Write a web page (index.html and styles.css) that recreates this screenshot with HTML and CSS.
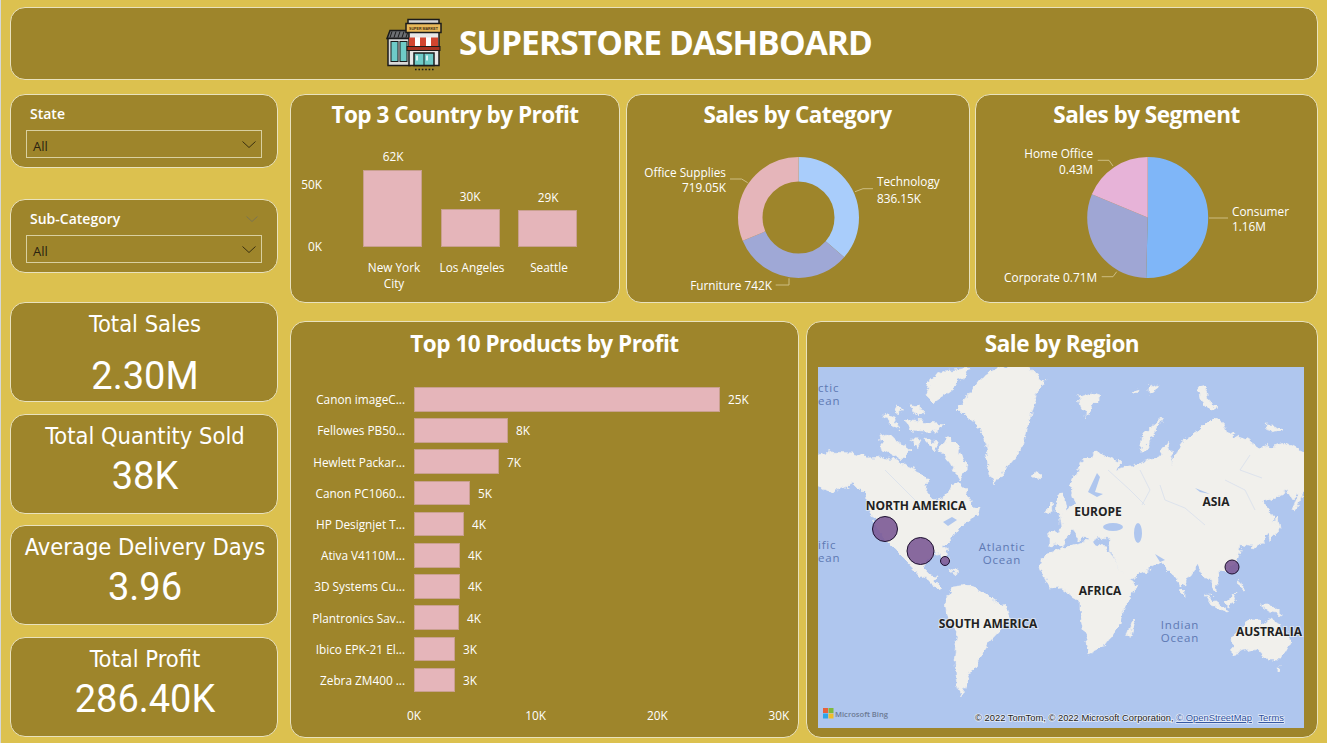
FILE: index.html
```html
<!doctype html>
<html lang="en">
<head>
  <meta charset="UTF-8">
  <title>Superstore Dashboard</title>
  <link rel="stylesheet" href="styles.css">
</head>
<body>
  <div class="page">
    <header class="card header">
      <svg class="logo" viewBox="0 0 56 54" width="56" height="54">
        <rect x="22" y="2.5" width="31" height="6" fill="#d8d8d8" stroke="#1b1b1b" stroke-width="1.5"/>
        <path d="M4 13.5 H26 V21.5 H1 Z" fill="#6d6f73" stroke="#1b1b1b" stroke-width="1.5"/>
        <path d="M6 14.5 L4 20.5 M10 14.5 L8 20.5 M14 14.5 L12 20.5 M18 14.5 L16 20.5 M22 14.5 L20 20.5" stroke="#1b1b1b"/>
        <rect x="2" y="21.5" width="22" height="27" fill="#d9d9d9" stroke="#1b1b1b" stroke-width="1.5"/>
        <rect x="5" y="24.5" width="7" height="20" fill="#6ecbc8" stroke="#1b1b1b"/>
        <rect x="14" y="24.5" width="7" height="20" fill="#6ecbc8" stroke="#1b1b1b"/>
        <rect x="23" y="15" width="30" height="33.5" fill="#e8e8e8" stroke="#1b1b1b" stroke-width="1.5"/>
        <rect x="20" y="6.5" width="35" height="9" fill="#e9b95a" stroke="#1b1b1b" stroke-width="1.5"/>
        <text class="logo-text" x="37.5" y="12.5">SUPER MARKET</text>
        <rect x="23" y="20.5" width="6" height="10" fill="#d2452f"/>
        <rect x="29" y="20.5" width="5" height="10" fill="#fff"/>
        <rect x="34" y="20.5" width="6" height="10" fill="#d2452f"/>
        <rect x="40" y="20.5" width="5" height="10" fill="#fff"/>
        <rect x="45" y="20.5" width="7" height="10" fill="#d2452f"/>
        <rect x="21" y="29.5" width="33" height="4" fill="#a8321f" stroke="#1b1b1b"/>
        <rect x="28" y="36" width="20" height="12.5" fill="#6ecbc8" stroke="#1b1b1b" stroke-width="1.5"/>
        <path d="M38 36 V48.5" stroke="#1b1b1b"/>
        <path d="M31 38.5 V43.5 M41 38.5 V43.5" stroke="#fff" stroke-width="1.5"/>
        <path d="M29 52.5 H48" stroke="#1b1b1b" stroke-width="1.5" stroke-dasharray="1.6 1.8"/>
      </svg>
      <h1 class="header-title">SUPERSTORE DASHBOARD</h1>
    </header>

    <div class="content">
      <aside class="side">
        <div class="card slicer">
          <div class="slicer-title">State</div>
          <div class="slicer-box">
            <span>All</span>
            <svg class="chevron" viewBox="0 0 14 7" width="14" height="7"><path d="M0.5 0.5 L7 6.5 L13.5 0.5"/></svg>
          </div>
        </div>
        <div class="card slicer slicer-second">
          <div class="slicer-title">Sub-Category
            <svg class="chevron chevron-faint" viewBox="0 0 12 6" width="12" height="6"><path d="M0.5 0.5 L6 5.5 L11.5 0.5"/></svg>
          </div>
          <div class="slicer-box">
            <span>All</span>
            <svg class="chevron" viewBox="0 0 14 7" width="14" height="7"><path d="M0.5 0.5 L7 6.5 L13.5 0.5"/></svg>
          </div>
        </div>

        <div class="kpis">
          <div class="card kpi kpi-first">
            <div class="kpi-label">Total Sales</div>
            <div class="kpi-value">2.30M</div>
          </div>
          <div class="card kpi">
            <div class="kpi-label">Total Quantity Sold</div>
            <div class="kpi-value">38K</div>
          </div>
          <div class="card kpi">
            <div class="kpi-label">Average Delivery Days</div>
            <div class="kpi-value">3.96</div>
          </div>
          <div class="card kpi">
            <div class="kpi-label">Total Profit</div>
            <div class="kpi-value">286.40K</div>
          </div>
        </div>
      </aside>

      <main class="charts">
        <div class="row-top">
          <section class="card chart-card">
            <h2 class="chart-title">Top 3 Country by Profit</h2>
            <svg class="chart" viewBox="291 140 328 162" width="328" height="162">
              <rect class="bar" x="363.5" y="170.5" width="58" height="76"/>
              <rect class="bar" x="441.5" y="209.5" width="58" height="37"/>
              <rect class="bar" x="518.5" y="210.5" width="58" height="36"/>
              <text class="lbl mid" x="393" y="161">62K</text>
              <text class="lbl mid" x="470" y="201">30K</text>
              <text class="lbl mid" x="548" y="202">29K</text>
              <text class="lbl end" x="322" y="189">50K</text>
              <text class="lbl end" x="322" y="251">0K</text>
              <text class="lbl mid" x="394" y="272">New York</text>
              <text class="lbl mid" x="394" y="288">City</text>
              <text class="lbl mid" x="472" y="272">Los Angeles</text>
              <text class="lbl mid" x="549" y="272">Seattle</text>
            </svg>
          </section>

          <section class="card chart-card">
            <h2 class="chart-title">Sales by Category</h2>
            <svg class="chart" viewBox="627 140 342 162" width="342" height="162">
              <g transform="rotate(-90 798.5 217.5)" fill="none" stroke-width="24.5">
                <circle cx="798.5" cy="217.5" r="48.25" pathLength="100" stroke="#a9cdfb" stroke-dasharray="36.4 100"/>
                <circle cx="798.5" cy="217.5" r="48.25" pathLength="100" stroke="#9fa8d6" stroke-dasharray="32.3 100" stroke-dashoffset="-36.4"/>
                <circle cx="798.5" cy="217.5" r="48.25" pathLength="100" stroke="#e5b5ba" stroke-dasharray="31.3 100" stroke-dashoffset="-68.7"/>
              </g>
              <path class="leader" d="M855 191.7 L863 188.7 H873"/>
              <path class="leader" d="M747.7 182.7 L741.7 179 H730"/>
              <path class="leader" d="M789 278.3 V285 H775.7"/>
              <text class="lbl" x="877" y="186">Technology</text>
              <text class="lbl" x="877" y="203">836.15K</text>
              <text class="lbl end" x="726" y="177">Office Supplies</text>
              <text class="lbl end" x="726" y="192">719.05K</text>
              <text class="lbl end" x="772" y="290">Furniture 742K</text>
            </svg>
          </section>

          <section class="card chart-card">
            <h2 class="chart-title">Sales by Segment</h2>
            <svg class="chart" viewBox="976 140 341 162" width="341" height="162">
              <g transform="rotate(-90 1147.7 217.5)" fill="none" stroke-width="60.5">
                <circle cx="1147.7" cy="217.5" r="30.25" pathLength="100" stroke="#7fb6f8" stroke-dasharray="50.4 100"/>
                <circle cx="1147.7" cy="217.5" r="30.25" pathLength="100" stroke="#9fa6d4" stroke-dasharray="30.9 100" stroke-dashoffset="-50.4"/>
                <circle cx="1147.7" cy="217.5" r="30.25" pathLength="100" stroke="#e7b3d8" stroke-dasharray="18.7 100" stroke-dashoffset="-81.3"/>
              </g>
              <path class="leader" d="M1209 218 H1228"/>
              <path class="leader" d="M1097.7 160.3 H1109 L1113 166"/>
              <path class="leader" d="M1101.7 276.7 H1113 L1116.7 271.7"/>
              <text class="lbl" x="1232" y="216">Consumer</text>
              <text class="lbl" x="1232" y="231">1.16M</text>
              <text class="lbl end" x="1093" y="158">Home Office</text>
              <text class="lbl end" x="1093" y="174">0.43M</text>
              <text class="lbl end" x="1097" y="282">Corporate 0.71M</text>
            </svg>
          </section>
        </div>

        <div class="row-bottom">
          <section class="card chart-card">
            <h2 class="chart-title">Top 10 Products by Profit</h2>
            <div class="bars">
              <div class="bar-row"><span class="bar-name">Canon imageC...</span><span class="hbar" style="width:306px"></span><span class="bar-val">25K</span></div>
              <div class="bar-row"><span class="bar-name">Fellowes PB50...</span><span class="hbar" style="width:94px"></span><span class="bar-val">8K</span></div>
              <div class="bar-row"><span class="bar-name">Hewlett Packar...</span><span class="hbar" style="width:85px"></span><span class="bar-val">7K</span></div>
              <div class="bar-row"><span class="bar-name">Canon PC1060...</span><span class="hbar" style="width:56px"></span><span class="bar-val">5K</span></div>
              <div class="bar-row"><span class="bar-name">HP Designjet T...</span><span class="hbar" style="width:50px"></span><span class="bar-val">4K</span></div>
              <div class="bar-row"><span class="bar-name">Ativa V4110M...</span><span class="hbar" style="width:46px"></span><span class="bar-val">4K</span></div>
              <div class="bar-row"><span class="bar-name">3D Systems Cu...</span><span class="hbar" style="width:46px"></span><span class="bar-val">4K</span></div>
              <div class="bar-row"><span class="bar-name">Plantronics Sav...</span><span class="hbar" style="width:45px"></span><span class="bar-val">4K</span></div>
              <div class="bar-row"><span class="bar-name">Ibico EPK-21 El...</span><span class="hbar" style="width:41px"></span><span class="bar-val">3K</span></div>
              <div class="bar-row"><span class="bar-name">Zebra ZM400 ...</span><span class="hbar" style="width:41px"></span><span class="bar-val">3K</span></div>
            </div>
            <div class="bar-axis"><span>0K</span><span>10K</span><span>20K</span><span>30K</span></div>
          </section>

          <section class="card chart-card">
            <h2 class="chart-title">Sale by Region</h2>
            <svg class="map" viewBox="818 367 486 361" width="486" height="361">
              <defs>
                <filter id="coast" x="-5%" y="-5%" width="110%" height="110%">
                  <feTurbulence type="fractalNoise" baseFrequency="0.13" numOctaves="4" seed="4"/>
                  <feDisplacementMap in="SourceGraphic" scale="9" xChannelSelector="R" yChannelSelector="G"/>
                  <feGaussianBlur stdDeviation="0.45"/>
                </filter>
              </defs>
              <rect x="818" y="367" width="486" height="361" fill="#afc6ee"/>
              <g class="land" filter="url(#coast)">
                <!-- americas -->
                <path d="M810 457 L830 452 853 453 867 458 880 457 893 460 910 467 923 473 927 482 925 493 937 500 945 498 950 486 960 483 967 495 978 513 968 522 957 530 950 540 944 546 946 552 948 562 946 563 941 553 932 555 926 560 925 570 930 575 938 576 936 581 943 588 940 590 930 582 920 576 907 562 897 552 890 545 885 542 873 517 867 497 853 483 840 490 830 493 810 482 Z"/>
                <path d="M945 602 L953 587 967 585 987 595 1010 610 1003 628 990 642 977 662 967 678 962 697 957 688 955 662 958 635 947 615 Z"/>
                <path d="M957 407 L970 393 980 380 997 368 1023 364 1045 380 1037 393 1030 417 1023 447 1010 463 1000 477 995 485 990 473 987 450 980 427 967 417 Z"/>
                <path d="M925 395 L930 380 945 371 970 368 960 383 945 395 933 403 Z"/>
                <path d="M947 437 L955 443 967 467 960 480 950 463 940 450 Z"/>
                <path d="M880 437 L890 435 910 450 900 460 883 450 Z"/>
                <path d="M883 415 L895 418 900 430 890 425 Z"/>
                <path d="M905 420 L945 425 935 432 912 430 Z"/>
                <path d="M910 405 L925 410 918 418 Z"/>
                <path d="M925 440 L938 442 934 450 Z"/>
                <path d="M895 405 L903 408 899 414 Z"/>
                <path d="M912 438 L920 440 916 447 Z"/>
                <path d="M950 568 L960 572 957 574 Z"/>
                <path d="M972 510 L980 508 978 516 Z"/>
                <!-- eurasia -->
                <path d="M1070 487 L1080 463 1097 452 1122 463 1115 470 1140 463 1160 457 1167 440 1173 463 1182 440 1200 430 1213 417 1223 423 1227 433 1247 440 1260 448 1287 443 1310 455 1310 483 1293 500 1287 490 1263 503 1273 517 1273 527 1257 547 1240 545 1237 560 1223 572 1217 578 1217 592 1203 575 1197 565 1182 588 1173 575 1160 562 1150 568 1127 580 1112 553 1110 538 1095 537 1092 545 1085 535 1080 540 1072 530 1068 535 1062 547 1050 545 1050 534 1062 528 1060 515 1075 503 1072 495 Z"/>
                <path d="M1055 510 L1057 495 1063 494 1067 512 1058 515 Z"/>
                <path d="M1047 508 L1052 503 1053 510 1048 513 Z"/>
                <path d="M1032 476 L1040 472 1043 476 1036 479 Z"/>
                <path d="M1078 397 L1090 393 1102 397 1092 405 1087 417 1080 407 Z"/>
                <path d="M1140 450 L1143 435 1163 418 1155 432 1145 450 Z"/>
                <path d="M1198 387 L1205 385 1208 400 1217 408 1210 410 1200 398 Z"/>
                <path d="M1133 392 L1140 390 1136 394 Z M1148 387 L1158 384 1154 392 1148 394 Z"/>
                <path d="M1265 425 L1275 425 1282 430 1270 432 Z"/>
                <path d="M1293 510 L1300 490 1304 482 1302 495 1296 512 Z"/>
                <path d="M1268 532 L1278 517 1280 530 1270 540 Z"/>
                <!-- africa and south -->
                <path d="M1062 549 L1085 541 1105 546 1110 552 1127 578 1138 585 1122 612 1120 625 1103 648 1090 654 1083 628 1080 615 1080 602 1060 587 1050 588 1040 568 1045 555 Z"/>
                <path d="M1135 620 L1130 638 1127 637 1132 623 Z"/>
                <path d="M1232 638 L1247 620 1260 620 1262 626 1271 619 1280 625 1290 642 1280 660 1268 660 1257 648 1233 654 Z"/>
                <path d="M1205 593 L1213 600 1228 611 1226 612 1212 605 Z"/>
                <path d="M1226 602 L1237 592 1233 604 1228 607 Z"/>
                <path d="M1260 605 L1272 605 1282 614 1270 612 Z"/>
                <path d="M1238 577 L1241 583 1244 591 1239 587 Z"/>
                <path d="M1181 592 L1184 590 1184 595 Z"/>
                <path d="M1277 668 L1280 668 1279 671 Z"/>
              </g>
              <g class="water">
                <path d="M1088 492 L1097 473 1100 477 1095 492 1103 494 1097 497 Z"/>
                <ellipse cx="1113" cy="527" rx="10" ry="4"/>
                <ellipse cx="1138" cy="533" rx="4" ry="10"/>
                <path d="M943 522 L952 517 957 520 948 526 Z"/>
                <path d="M1155 554 L1165 560 1160 562 Z"/>
                <path d="M1195 488 L1210 494 1200 492 Z"/>
              </g>
              <g class="rivers">
                <path d="M1160 485 L1165 500 1185 508 1205 525"/>
                <path d="M1225 480 L1245 490 1255 510"/>
                <path d="M1108 470 L1130 490 1145 505"/>
                <path d="M885 470 L905 490 925 510"/>
                <path d="M1250 455 L1240 470 1262 478"/>
                <path d="M1140 470 L1150 490 1142 505"/>
              </g>

              <text class="ocean" x="818" y="392">ctic</text>
              <text class="ocean" x="818" y="405">ean</text>
              <text class="ocean" x="818" y="549">ific</text>
              <text class="ocean" x="818" y="562">ean</text>
              <text class="ocean" x="1002" y="551" text-anchor="middle">Atlantic</text>
              <text class="ocean" x="1002" y="564" text-anchor="middle">Ocean</text>
              <text class="ocean" x="1180" y="629" text-anchor="middle">Indian</text>
              <text class="ocean" x="1180" y="642" text-anchor="middle">Ocean</text>

              <text class="region" x="916" y="510">NORTH AMERICA</text>
              <text class="region" x="1098" y="516">EUROPE</text>
              <text class="region" x="1216" y="506">ASIA</text>
              <text class="region" x="1100" y="595">AFRICA</text>
              <text class="region" x="988" y="628">SOUTH AMERICA</text>
              <text class="region" x="1269" y="636">AUSTRALIA</text>

              <circle class="bubble" cx="885" cy="529" r="12.5"/>
              <circle class="bubble" cx="920.5" cy="551" r="13.5"/>
              <circle class="bubble" cx="945" cy="561" r="4.5"/>
              <circle class="bubble" cx="1232" cy="567" r="7"/>

              <rect x="823" y="708" width="5" height="5" fill="#e8613a"/>
              <rect x="828.5" y="708" width="5" height="5" fill="#7fba3c"/>
              <rect x="823" y="713.5" width="5" height="5" fill="#2fa5e8"/>
              <rect x="828.5" y="713.5" width="5" height="5" fill="#f0bd2a"/>
              <text class="bing" x="835" y="717">Microsoft Bing</text>
              <text class="credit" x="975" y="721">© 2022 TomTom, © 2022 Microsoft Corporation, <tspan class="credit-link">© OpenStreetMap</tspan>  <tspan class="credit-link" dx="4">Terms</tspan></text>
            </svg>
          </section>
        </div>
      </main>
    </div>
  </div>
</body>
</html>
```

FILE: styles.css
```css
* {
    box-sizing: border-box;
}

body {
    margin: 0;
    background: #dcc14f;
    color: #fff;
    font-family: "Open Sans", sans-serif;
    overflow: hidden;
}

.page {
    width: 1327px;
    height: 743px;
    padding: 7px 9px 5px 9px;
    border-left: 1px solid #d5d8da;
    display: flex;
    flex-direction: column;
    gap: 14px;
}

.card {
    background: #9e852b;
    border: 1px solid #e9e2bd;
    border-radius: 15px;
}

.header {
    height: 73px;
    flex: none;
    display: flex;
    align-items: center;
    justify-content: center;
    gap: 17px;
    padding-right: 70px;
}

.logo {
    flex: none;
}

.logo-text {
    font-family: "Liberation Sans", sans-serif;
    font-size: 3.6px;
    font-weight: 700;
    fill: #3a2a10;
    text-anchor: middle;
}

.header-title {
    margin: 0 0 3px;
    font-size: 33.5px;
    font-weight: 700;
    letter-spacing: -0.9px;
}

.content {
    display: flex;
    gap: 12px;
    flex: 1;
}

.side {
    width: 268px;
    flex: none;
    display: flex;
    flex-direction: column;
}

.slicer {
    height: 74px;
    padding: 9px 15px 8px 15px;
}

.slicer-second {
    margin-top: 31px;
}

.slicer-title {
    display: flex;
    align-items: center;
    justify-content: space-between;
    height: 19px;
    padding: 0 4px 0 4px;
    font-size: 14px;
    font-weight: 600;
}

.slicer-box {
    height: 28px;
    margin-top: 7px;
    padding: 0 5px 0 6px;
    display: flex;
    align-items: center;
    justify-content: space-between;
    border: 1px solid #d9d0a0;
    color: #2a2210;
    font-size: 13px;
}

.slicer-box span {
    padding-top: 3px;
}

.chevron {
    fill: none;
    stroke: #3a3010;
    stroke-width: 1;
}

.chevron-faint {
    stroke: #7c7450;
}

.kpis {
    margin-top: 29px;
    display: flex;
    flex-direction: column;
    gap: 11.6px;
}

.kpi {
    height: 100px;
    padding: 6px 0 0 2px;
    text-align: center;
}

.kpi-label {
    font-family: "DejaVu Sans", sans-serif;
    font-stretch: condensed;
    font-size: 23.5px;
    line-height: 30px;
}

.kpi-value {
    margin-top: 3px;
    font-family: "Roboto", sans-serif;
    font-size: 38px;
    line-height: 44px;
}

.kpi-first .kpi-value {
    margin-top: 15px;
}

.charts {
    flex: 1;
    display: flex;
    flex-direction: column;
    gap: 18px;
}

.row-top {
    display: grid;
    grid-template-columns: 330px 344px 343px;
    column-gap: 5.5px;
    height: 209px;
}

.row-bottom {
    display: grid;
    grid-template-columns: 509px 512px;
    column-gap: 7px;
    height: 417px;
}

.row-bottom .chart-title {
    line-height: 44px;
}

.chart-card {
    display: flex;
    flex-direction: column;
    min-width: 0;
}

.chart-title {
    margin: 0;
    height: 45px;
    flex: none;
    line-height: 40px;
    text-align: center;
    font-size: 22.5px;
    font-weight: 700;
    letter-spacing: -0.5px;
}

.chart {
    display: block;
}

.bar {
    fill: #e5b5ba;
    stroke: #c9a08f;
    stroke-width: 1;
}

.lbl {
    fill: #fff;
    font-size: 11.8px;
}

.mid {
    text-anchor: middle;
}

.end {
    text-anchor: end;
}

.leader {
    fill: none;
    stroke: #cdbd82;
    stroke-width: 1;
}

.bars {
    margin-top: 20px;
    display: flex;
    flex-direction: column;
    gap: 6.6px;
}

.bar-row {
    height: 24.6px;
    display: flex;
    align-items: center;
    font-size: 11.8px;
}

.bar-name {
    width: 114px;
    flex: none;
    margin-right: 9px;
    text-align: right;
    white-space: nowrap;
}

.hbar {
    height: 100%;
    background: #e5b5ba;
    border: 1px solid #c9a08f;
}

.bar-val {
    margin-left: 8px;
}

.bar-axis {
    margin: 15px 0 0 111px;
    width: 389px;
    display: flex;
    justify-content: space-between;
    font-size: 11.8px;
}

.bar-axis span {
    width: 24px;
    text-align: center;
}

.map {
    display: block;
    margin-left: 11px;
}

.land {
    fill: #f1f0ec;
    stroke: #f1f0ec;
    stroke-width: 0.6;
    stroke-linejoin: round;
}

.water {
    fill: #afc6ee;
}

.rivers {
    fill: none;
    stroke: #d4dcec;
    stroke-width: 0.7;
}

.ocean {
    fill: #5e79b3;
    font-size: 11.5px;
    letter-spacing: 0.8px;
}

.region {
    fill: #222;
    font-size: 12px;
    font-weight: 700;
    text-anchor: middle;
    stroke: #f4f4f2;
    stroke-width: 2px;
    stroke-opacity: 0.6;
    paint-order: stroke;
}

.bubble {
    fill: #7c5a96;
    fill-opacity: 0.9;
    stroke: #1d1030;
    stroke-width: 1;
}

.bing {
    fill: #6c7a94;
    font-size: 7.6px;
    font-weight: 600;
}

.credit {
    fill: #222;
    font-family: "Liberation Sans", sans-serif;
    font-size: 9.4px;
    stroke: #fff;
    stroke-width: 1.5px;
    stroke-opacity: 0.7;
    paint-order: stroke;
}

.credit-link {
    fill: #2b4f9e;
    text-decoration: underline;
}
```
